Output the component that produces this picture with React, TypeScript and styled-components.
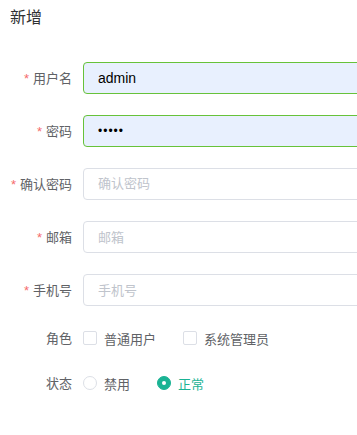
import React from 'react';
import styled, { createGlobalStyle } from 'styled-components';

const GlobalStyle = createGlobalStyle`
  html, body {
    margin: 0;
    padding: 0;
    background: #fff;
    overflow: hidden;
  }
  body {
    font-family: "Liberation Sans", "Noto Sans CJK SC", sans-serif;
  }
`;

const Dialog = styled.div`
  width: 480px;
  background: #fff;
`;

const Header = styled.div`
  height: 32px;
  padding-left: 10px;
  display: flex;
  align-items: center;
  font-size: 16px;
  color: #303133;
  font-family: "Noto Sans CJK SC", sans-serif;
`;

const Form = styled.div`
  padding-top: 30px;
  display: flex;
  flex-direction: column;
`;

const FormItem = styled.div<{ compact?: boolean; gap?: number }>`
  display: flex;
  align-items: center;
  height: ${p => (p.compact ? 22 : 32)}px;
  margin-bottom: ${p => p.gap ?? 21}px;
`;

const Label = styled.label`
  width: 83px;
  box-sizing: border-box;
  padding-right: 11px;
  flex-shrink: 0;
  text-align: right;
  font-size: 13px;
  color: #606266;
  font-family: "Noto Sans CJK SC", sans-serif;
  line-height: 32px;
`;

const Star = styled.span`
  color: #f56c6c;
  margin-right: 4px;
  font-family: "Liberation Sans", sans-serif;
`;

const Input = styled.input<{ valid?: boolean }>`
  width: 360px;
  height: 32px;
  box-sizing: border-box;
  padding: 0 14px;
  border: 1px solid ${p => (p.valid ? '#67c23a' : '#dcdfe6')};
  border-radius: 4px;
  background: ${p => (p.valid ? '#e8f0fe' : '#fff')};
  color: #000;
  font-size: 14px;
  font-family: "Liberation Sans", "Noto Sans CJK SC", sans-serif;
  outline: none;

  &[type='password'] {
    letter-spacing: 1px;
    font-size: 12px;
  }

  &::placeholder {
    color: #c0c4cc;
    font-size: 13px;
    letter-spacing: 0;
    font-family: "Noto Sans CJK SC", sans-serif;
  }
`;

const Options = styled.div`
  display: flex;
  align-items: center;
`;

const Option = styled.span<{ active?: boolean }>`
  display: flex;
  align-items: center;
  gap: 7px;
  margin-right: 27px;
  font-size: 13px;
  color: ${p => (p.active ? '#1ab394' : '#606266')};
  font-family: "Noto Sans CJK SC", sans-serif;
`;

const Box = styled.span`
  width: 14px;
  height: 14px;
  box-sizing: border-box;
  border: 1px solid #dcdfe6;
  border-radius: 2px;
  background: #fff;
`;

const Radio = styled.span<{ checked?: boolean }>`
  width: 14px;
  height: 14px;
  box-sizing: border-box;
  border-radius: 50%;
  border: 1px solid ${p => (p.checked ? '#1ab394' : '#dcdfe6')};
  background: ${p => (p.checked ? '#1ab394' : '#fff')};
  display: flex;
  align-items: center;
  justify-content: center;

  &::after {
    content: '';
    width: 4px;
    height: 4px;
    border-radius: 50%;
    background: #fff;
    display: ${p => (p.checked ? 'block' : 'none')};
  }
`;

const fields = [
  { label: '用户名', type: 'text', value: 'admin', valid: true },
  { label: '密码', type: 'password', value: 'admin', valid: true },
  { label: '确认密码', type: 'password', placeholder: '确认密码' },
  { label: '邮箱', type: 'text', placeholder: '邮箱' },
  { label: '手机号', type: 'text', placeholder: '手机号' },
];

export default function App() {
  return (
    <>
      <GlobalStyle />
      <Dialog>
        <Header>新增</Header>
        <Form>
          {fields.map(f => (
            <FormItem key={f.label}>
              <Label>
                <Star>*</Star>
                {f.label}
              </Label>
              <Input
                type={f.type}
                valid={f.valid}
                defaultValue={f.value}
                placeholder={f.placeholder}
              />
            </FormItem>
          ))}
          <FormItem compact gap={23}>
            <Label>角色</Label>
            <Options>
              <Option><Box />普通用户</Option>
              <Option><Box />系统管理员</Option>
            </Options>
          </FormItem>
          <FormItem compact gap={0}>
            <Label>状态</Label>
            <Options>
              <Option><Radio />禁用</Option>
              <Option active><Radio checked />正常</Option>
            </Options>
          </FormItem>
        </Form>
      </Dialog>
    </>
  );
}
